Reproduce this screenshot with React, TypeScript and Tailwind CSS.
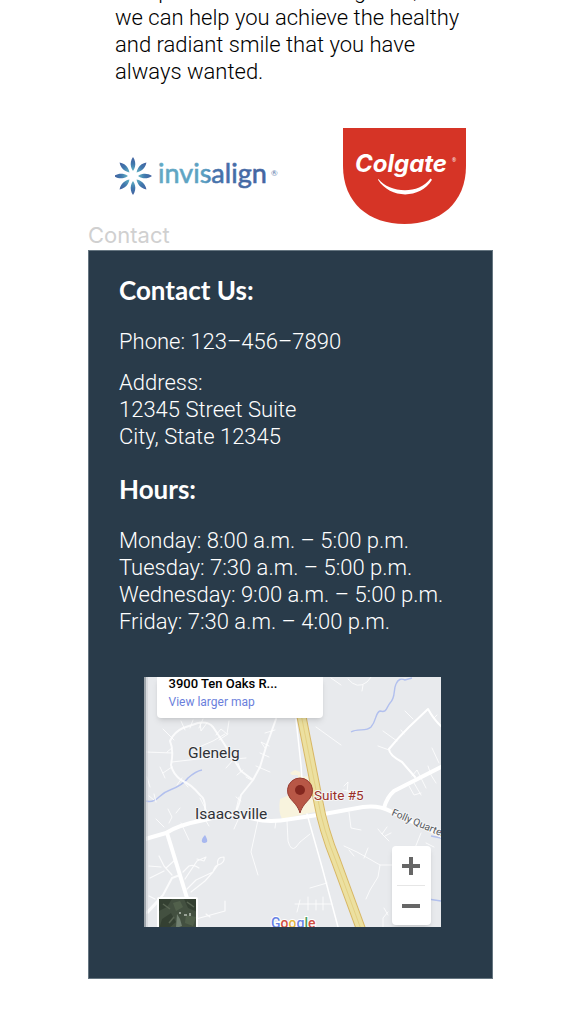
const hours = [
  'Monday: 8:00 a.m. – 5:00 p.m.',
  'Tuesday: 7:30 a.m. – 5:00 p.m.',
  'Wednesday: 9:00 a.m. – 5:00 p.m.',
  'Friday: 7:30 a.m. – 4:00 p.m.',
];

function InvisalignLogo() {
  return (
    <svg viewBox="0 0 164 40" className="h-10 w-[164px]" role="img" aria-label="Invisalign">
      <defs>
        <linearGradient id="petal" gradientUnits="userSpaceOnUse" x1="0" y1="-19" x2="0" y2="-5">
          <stop offset="0" stopColor="#43619f" />
          <stop offset="0.5" stopColor="#4078ad" />
          <stop offset="1" stopColor="#62b3c4" />
        </linearGradient>
        <linearGradient id="word" gradientUnits="userSpaceOnUse" x1="44" y1="0" x2="154" y2="0">
          <stop offset="0" stopColor="#63a9c4" />
          <stop offset="0.42" stopColor="#5b9fc1" />
          <stop offset="0.5" stopColor="#4672ab" />
          <stop offset="1" stopColor="#44639f" />
        </linearGradient>
      </defs>
      <g transform="translate(18 20)" fill="url(#petal)">
        {[0, 45, 90, 135, 180, 225, 270, 315].map((angle) => (
          <path key={angle} transform={`rotate(${angle})`} d="M0-19C2.1-16.2 2.8-12.5 2-9.3C1.6-7.7.9-6.2 0-5C-.9-6.2-1.6-7.7-2-9.3C-2.8-12.5-2.1-16.2 0-19Z" />
        ))}
      </g>
      <text x="43" y="27" fontSize="27" fontFamily="Lato, sans-serif" fill="url(#word)" stroke="url(#word)" strokeWidth="0.600">
        invisalign
      </text>
      <text x="156" y="20" fontSize="8" fontFamily="Lato, sans-serif" fill="#5c7eae">
        ®
      </text>
    </svg>
  );
}

function ColgateLogo() {
  return (
    <svg viewBox="0 0 124 98" className="h-[98px] w-[124px]" role="img" aria-label="Colgate">
      <path d="M0 1H123V39C123 76 97 97 61.500 97S0 76 0 39Z" fill="#d63426" />
      <text x="12" y="45" fontSize="24" fontWeight="700" fontStyle="italic" fontFamily="Inter, sans-serif" fill="#fff">
        Colgate
      </text>
      <text x="109" y="35" fontSize="5" fontFamily="'Open Sans', sans-serif" fill="#fff">
        ®
      </text>
      <path d="M35.500 52C46 65.500 75 68.500 87.500 51.500L89 52.800C77 72.500 47 72 35 52.800Z" fill="#fff" />
    </svg>
  );
}

function MapDrawing() {
  return (
    <svg viewBox="143 677 297 250" className="block h-full w-full" role="img" aria-label="Map around Suite #5">
      <defs>
        <pattern id="forest" width="38" height="30" patternUnits="userSpaceOnUse" x="158" y="899">
          <rect width="38" height="30" fill="#435040" />
          <path d="M0 0H13L8 8L0 12ZM25 0H38V13L29 9ZM3 20L12 14L17 23L9 30H0Z" fill="#344032" />
          <path d="M14 4L21 2L24 8L17 12ZM27 16L37 18L34 27L26 24Z" fill="#51604b" />
          <path d="M18 15L21 20L23 27L17 29Z" fill="#718070" />
          <path d="M25 15h3v2h-3ZM30 14h2v3h-2ZM20 13h2v2h-2Z" fill="#9aa397" />
          <path d="M4 5L11 10M10 24L15 18M28 3L35 8" stroke="#596553" strokeWidth="1.500" />
        </pattern>
      </defs>
      <rect x="143" y="677" width="297" height="250" fill="#e8eaed" />
      <path d="M289 773L294 770L299 772L300 777L307 776L309 790L312 801L317 809L314 812L281 819Q277 812 279 799L286 796L297 793V775L291 775Z" fill="#f8f3dd" />
      <g fill="none" stroke="#b2c0ee" strokeWidth="1.400">
        <path d="M145 801Q152 803 158 797Q163 792 169 790Q182 785 187 778Q195 771 201 770" />
        <path d="M350 732C357 728 365 732 370 727C376 720 374 713 379 711C386 713 385 708 389 703C395 697 392 690 395 684Q398 677 404 680L411 678" />
        <path d="M430 836L440 838M427 899L440 901" />
      </g>
      <path d="M204 835Q207 840 206 842Q203 844 201 842Q200 839 204 835Z" fill="#a8b8ef" />
      <g fill="none" stroke="#fff" strokeOpacity="0.800" strokeLinecap="round" strokeLinejoin="round">
        <path strokeWidth="1" d="M145 752L171 753M171 762L206 758M162 729L173 740M166 752L171 748M180 721L184 730M192 720L189 728M199 722L200 731L206 723M198 728L202 719M215 735L220 729L226 734L228 721M218 740L227 734M196 748L212 741L224 734M225 768L233 759L245 758M240 771L237 763M236 775L242 770M245 777L250 780M255 766L269 772M259 753L268 757M264 748L260 742L268 746M264 733L274 730M153 794L155 802" />
        <path strokeWidth="1" d="M159 767L164 778M171 767L162 773M176 785L181 778M182 781L187 787M146 777L149 787M148 796L153 800M167 809L171 817L168 823M175 813L179 808M155 819L163 827M180 823L188 840M205 821L208 826M207 813L203 806L199 798M235 810L238 797M240 801L235 797M237 820L233 829" />
        <path strokeWidth="1" d="M257 820L250 852L257 875M275 821L274 828M286 821L287 841Q290 852 295 847L299 842L309 834M310 774L316 779M315 727L340 745M330 678L340 685M347 679Q356 690 366 682L371 676M362 685L361 691M382 731L396 741M404 711L412 719M377 746L388 750M400 730L403 734" />
        <path strokeWidth="1" d="M413 783L420 795M411 776L416 770L425 788M427 766L430 775L435 783M431 748L438 763M433 718L436 715M343 786L347 782L346 792M342 790L352 792M408 786L413 795L420 793M348 812L350 828L360 830M377 829L381 834L386 827M381 834L388 841M384 836L390 833M343 846L356 852L365 857L379 865L391 865M363 858L367 848M379 865L377 877L369 890L365 899M348 850L353 856" />
        <path strokeWidth="1" d="M309 888L326 883M294 904L330 904M299 900L296 912M307 897V910M315 900V910M322 897V910M382 927V918L387 912M383 908L387 915M420 833L414 848M425 843L433 847" />
        <path strokeWidth="1.200" d="M184 879L196 861L205 857L203 861L196 859M186 889L195 880L212 872Q214 865 217 865Q215 857 223 857Q224 863 217 865L212 872L204 881L190 892M182 872L188 866Q193 864 198 868M182 923L195 919L224 911V901M147 913L161 898M158 856L163 866L171 875M148 866L160 867M149 878L163 871M165 868L174 860M148 896L154 899M209 917L205 914" />
        <path strokeWidth="1.500" strokeOpacity="1" d="M295 719L300 765L302 795M306 814L321 867L337 927" />
        <path strokeWidth="2" d="M145 913L162 895L171 878L179 875M204 812Q205 799 199 795Q190 784 180 780Q172 774 170 765Q173 750 169 741Q173 732 182 728L197 723Q207 721 212 727L222 742L232 758L240 771L252 780L259 767L265 747L275 719M252 780L240 795Q239 803 235 812" />
        <path strokeWidth="2" strokeOpacity="1" d="M414 777L401 762Q388 755 388 749Q397 738 408 727L427 709Q433 720 441 727" />
        <path strokeWidth="4" strokeOpacity="1" d="M166 833L186 898" />
        <path strokeWidth="4" strokeOpacity="1" d="M141 840L165 833Q177 825 203 820C223 815 235 815 254 819Q268 823 290 819L323 814L362 807Q378 805 389 811L445 838M383 808Q386 797 393 791L442 766" />
      </g>
      <path d="M300 714L317 800Q322 829 335 861L361 932" fill="none" stroke="#d8b765" strokeWidth="10" />
      <path d="M300 714L317 800Q322 829 335 861L361 932" fill="none" stroke="#ece0a0" strokeWidth="8" />
      <path d="M300 714L317 800Q322 829 335 861L361 932" fill="none" stroke="#e4d084" strokeWidth="1" />
      <g fontFamily="Roboto, sans-serif" fill="#303236" stroke="#f4f5f6" strokeWidth="2" strokeLinejoin="round" paintOrder="stroke">
        <text x="187" y="758" fontSize="15.500">Glenelg</text>
        <text x="194" y="819" fontSize="15.500">Isaacsville</text>
        <text x="313" y="800" fontSize="13.500" fill="#9b2f28">Suite #5</text>
        <text x="390" y="815" fontSize="10" fill="#55585c" transform="rotate(23 390 815)">Folly Quarter</text>
      </g>
      <path d="M299 813C297 806 293 803 289 798A12.500 12.500 0 1 1 309 798C305 803 301 806 299 813Z" fill="#b85746" stroke="#963c32" strokeWidth="1" />
      <circle cx="299" cy="790" r="5" fill="#83271f" />
      <rect x="156" y="897" width="41" height="34" rx="2" fill="#fff" />
      <rect x="158" y="899" width="37" height="30" fill="url(#forest)" />
      <text x="270" y="928" fontSize="14" fontWeight="500" fontFamily="Roboto, sans-serif" stroke="#fff" strokeWidth="2" paintOrder="stroke">
        <tspan fill="#6883e5">G</tspan><tspan fill="#d04e42">o</tspan><tspan fill="#e5b53d">o</tspan><tspan fill="#6883e5">g</tspan><tspan fill="#4a9b5b">l</tspan><tspan fill="#d04e42">e</tspan>
      </text>
      <path d="M144 677V927" stroke="#9da4aa" strokeWidth="2" />
      <path d="M146 677V927" stroke="#c9ccd1" strokeWidth="1" />
    </svg>
  );
}

function LocationMap() {
  return (
    <div className="relative mx-auto aspect-[297/250] w-full max-w-[297px] overflow-hidden">
      <MapDrawing />
      <div className="absolute top-0 left-[13px] w-[166px] rounded-b-sm bg-white px-3 pb-2 font-[Roboto,sans-serif] shadow-md">
        <p className="-mt-px text-[13px] leading-4 font-medium text-black">3900 Ten Oaks R...</p>
        <a href="#map" className="block pt-0.5 text-[12px] leading-4 text-[#6b7fdc]">View larger map</a>
      </div>
      <div className="absolute right-2.5 bottom-0.5 flex h-[79px] w-[39px] flex-col items-center rounded-sm bg-white shadow-md">
        <button type="button" aria-label="Zoom in" className="flex w-full flex-1 items-center justify-center">
          <svg viewBox="0 0 18 18" className="size-[18px]"><path d="M9 0V18M0 9H18" stroke="#666" strokeWidth="4" /></svg>
        </button>
        <div className="h-px w-7 bg-[#e6e6e6]" />
        <button type="button" aria-label="Zoom out" className="flex w-full flex-1 items-center justify-center">
          <svg viewBox="0 0 18 18" className="size-[18px]"><path d="M0 9H18" stroke="#666" strokeWidth="4" /></svg>
        </button>
      </div>
    </div>
  );
}

export default function App() {
  return (
    <main className="flow-root overflow-hidden bg-white pr-[76px] pb-[45px] pl-[88px] font-[Roboto,sans-serif]">
      <section className="-mt-[23px] pr-[26px] pl-[27px]">
        <p className="text-[22px] leading-[27px] font-light whitespace-nowrap text-black">
          comprehensive and loving care,<br />
          we can help you achieve the healthy<br />
          and radiant smile that you have<br />
          always wanted.
        </p>
        <div className="mt-[42px] flex items-center justify-between">
          <InvisalignLogo />
          <ColgateLogo />
        </div>
      </section>

      <p className="mt-[-5px] font-[Inter,sans-serif] text-[22px] leading-[30px] text-[#d0d0d0]">Contact</p>
      <section className="border border-[#667681] bg-[#293b4a] pt-[23px] pr-[27px] pb-[51px] pl-[30px] text-white">
        <h2 className="font-[Lato,sans-serif] text-[26px] leading-[32px] font-bold">Contact Us:</h2>
        <div className="mt-[22px] text-[22px] leading-[27px] font-light">
          <p>Phone: 123–456–7890</p>
          <address className="mt-3.5 not-italic">
            Address:<br />
            12345 Street Suite<br />
            City, State 12345
          </address>
        </div>
        <h2 className="mt-[23px] font-[Lato,sans-serif] text-[26px] leading-[32px] font-bold">Hours:</h2>
        <ul className="mt-[22px] mb-[42px] text-[22px] leading-[27px] font-light">
          {hours.map((line) => (
            <li key={line}>{line}</li>
          ))}
        </ul>
        <LocationMap />
      </section>
    </main>
  );
}
